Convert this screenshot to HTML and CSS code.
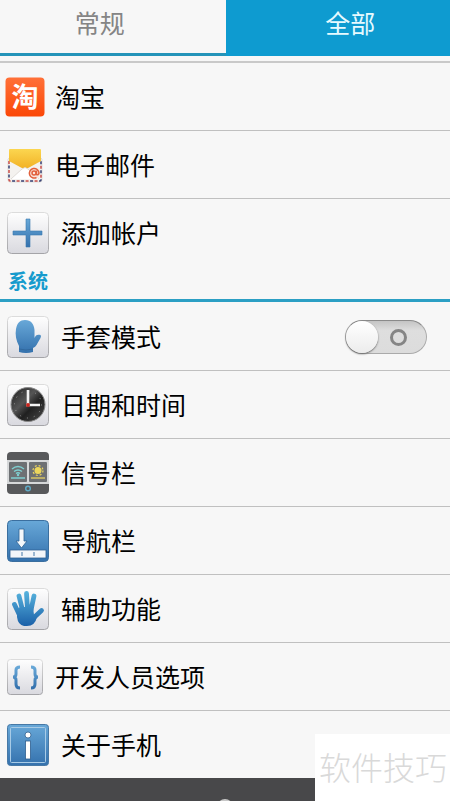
FILE: index.html
```html
<!doctype html>
<html lang="zh-CN">
<head>
  <meta charset="utf-8">
  <meta name="viewport" content="width=device-width, initial-scale=1">
  <title>设置</title>
  <link rel="stylesheet" href="styles.css">
</head>
<body>

<!-- shared gradients for the icons -->
<svg class="defs" width="0" height="0" aria-hidden="true">
  <defs>
    <linearGradient id="tile" x1="0" y1="0" x2="0" y2="1">
      <stop offset="0" stop-color="#fefefe"/>
      <stop offset="1" stop-color="#d9d9df"/>
    </linearGradient>
    <linearGradient id="tile-edge" x1="0" y1="0" x2="0" y2="1">
      <stop offset="0" stop-color="#dcdcdc"/>
      <stop offset="1" stop-color="#a4a4a8"/>
    </linearGradient>
    <linearGradient id="blue" x1="0" y1="0" x2="0" y2="1">
      <stop offset="0" stop-color="#68a8d8"/>
      <stop offset="1" stop-color="#3471ad"/>
    </linearGradient>
    <linearGradient id="hand" gradientUnits="userSpaceOnUse" x1="0" y1="3" x2="0" y2="38">
      <stop offset="0" stop-color="#58b4de"/>
      <stop offset="1" stop-color="#1b60a8"/>
    </linearGradient>
    <linearGradient id="orange" x1="0" y1="0" x2="0" y2="1">
      <stop offset="0" stop-color="#ff7038"/>
      <stop offset="1" stop-color="#fb4707"/>
    </linearGradient>
    <linearGradient id="yellow" x1="0" y1="0" x2="0" y2="1">
      <stop offset="0" stop-color="#fbd650"/>
      <stop offset="1" stop-color="#f2b226"/>
    </linearGradient>
    <linearGradient id="dial" x1="0" y1="0" x2="1" y2="1">
      <stop offset="0" stop-color="#1d1d1d"/>
      <stop offset="0.4" stop-color="#555"/>
      <stop offset="0.6" stop-color="#202020"/>
      <stop offset="1" stop-color="#4a4a4a"/>
    </linearGradient>
  </defs>
</svg>

<nav class="tabs">
  <a class="tab" href="#general">常规</a>
  <a class="tab active" href="#all">全部</a>
</nav>

<main class="settings">
  <ul class="list accounts">
    <li>
      <a class="row app" href="#taobao">
        <svg class="icon icon-app" viewBox="0 0 40 40" aria-hidden="true">
          <rect width="39" height="39" x="0.5" y="0.5" rx="4" fill="url(#orange)"/>
          <text class="logo-text" x="20" y="30" text-anchor="middle">淘</text>
        </svg>
        <span class="label">淘宝</span>
      </a>
    </li>
    <li>
      <a class="row" href="#email">
        <svg class="icon icon-small" viewBox="0 0 36 36" aria-hidden="true">
          <path d="M1 12l2-2h30l2 2v21a2 2 0 0 1-2 2H3a2 2 0 0 1-2-2z" fill="#f4f2ef" stroke="#d5d0ca" stroke-width="0.6"/>
          <path d="M2 14v19q0 1 1 1h30q1 0 1-1V14" fill="none" stroke="#c94c48" stroke-width="1.500" stroke-dasharray="3 6"/>
          <path d="M2 14v19q0 1 1 1h30q1 0 1-1V14" fill="none" stroke="#333d70" stroke-width="1.500" stroke-dasharray="3 6" stroke-dashoffset="4.500"/>
          <path d="M2 3q0-1 1-1h30q1 0 1 1v11l-11 6q-5 3-10 0L2 14z" fill="url(#yellow)"/>
          <path d="M4 32l11-10q3-3 6 0l11 10z" fill="#fff"/>
          <path d="M4 32l11-10q3-3 6 0l11 10" fill="none" stroke="#d8d4cf" stroke-width="0.8"/>
          <circle cx="27.500" cy="26" r="5.500" fill="#f8e4dc"/>
          <g fill="none" stroke="#e2603c" stroke-width="1.500">
            <circle cx="27" cy="26" r="2"/>
            <path d="M29.500 23.500v4q2 1 2.500-1.500a4.800 4.800 0 1 0-2.500 4.500"/>
          </g>
        </svg>
        <span class="label">电子邮件</span>
      </a>
    </li>
    <li>
      <a class="row" href="#add-account">
        <svg class="icon" viewBox="0 0 42 42" aria-hidden="true">
          <rect x="0.5" y="0.5" width="41" height="41" rx="4" fill="url(#tile)" stroke="url(#tile-edge)"/>
          <path d="M19 7h4v12h12v4H23v12h-4V23H6v-4h13z" fill="url(#blue)" stroke="#3b7bb0" stroke-width="0.6"/>
        </svg>
        <span class="label">添加帐户</span>
      </a>
    </li>
  </ul>

  <h2 class="section-title">系统</h2>

  <ul class="list system">
    <li class="row">
      <svg class="icon" viewBox="0 0 42 42" aria-hidden="true">
        <rect x="0.5" y="0.5" width="41" height="41" rx="4" fill="url(#tile)" stroke="url(#tile-edge)"/>
        <path d="M12 30C9 24 8 19 9 13c1-6 4-9 9-9 6 0 9 4 9.500 10v8c1-3 3-4 6-3q1 1 0 3l-4 7q-1 2-3.500 3v4q-7 2-14 0z" fill="url(#blue)"/>
        <path d="M12 33q7 2 14 0" fill="none" stroke="#2e6499" stroke-width="0.800"/>
      </svg>
      <label class="label" for="glove">手套模式</label>
      <input class="switch" type="checkbox" role="switch" id="glove">
    </li>
    <li>
      <a class="row" href="#date">
        <svg class="icon" viewBox="0 0 42 42" aria-hidden="true">
          <rect x="0.5" y="0.5" width="41" height="41" rx="4" fill="url(#tile)" stroke="url(#tile-edge)"/>
          <circle cx="21" cy="20.500" r="17" fill="url(#dial)" stroke="#8a8a8a"/>
          <circle cx="21" cy="20.500" r="13.500" fill="none" stroke="#999" stroke-width="1" stroke-dasharray="1 6.070"/>
          <path d="M21 22V6M19 21h14" stroke="#f2f2f2" stroke-width="2.600" fill="none"/>
          <circle cx="21" cy="21" r="2" fill="#c8261e"/>
        </svg>
        <span class="label">日期和时间</span>
      </a>
    </li>
    <li>
      <a class="row" href="#signal">
        <svg class="icon" viewBox="0 0 42 42" aria-hidden="true">
          <rect width="42" height="42" rx="4" fill="#58595b"/>
          <path d="M0 8h42v24H0z" fill="#d6d8d9"/>
          <rect x="2" y="10" width="18" height="20" rx="1" fill="#6d7073"/>
          <rect x="22" y="10" width="18" height="20" rx="1" fill="#6d7073"/>
          <g fill="none" stroke="#7fcfd0" stroke-width="1.500">
            <path d="M5 17q6-5 12 0M7 19.500q4-3 8 0M9 21.500q2-1.500 4 0"/>
            <path d="M4 26h14"/>
            <circle cx="21" cy="36.500" r="2.300" stroke="#60a9c4"/>
          </g>
          <circle cx="11" cy="23" r="1.200" fill="#7fcfd0"/>
          <circle cx="31" cy="18.500" r="3.500" fill="#ecd65c"/>
          <circle cx="31" cy="18.500" r="5" fill="none" stroke="#ecd65c" stroke-width="1.200" stroke-dasharray="2 1.930"/>
          <path d="M24 26h14" stroke="#d6c365" stroke-width="1.500"/>
        </svg>
        <span class="label">信号栏</span>
      </a>
    </li>
    <li>
      <a class="row" href="#navigation">
        <svg class="icon" viewBox="0 0 42 42" aria-hidden="true">
          <rect x="0.5" y="0.5" width="41" height="41" rx="4" fill="url(#blue)" stroke="#3b6f9f"/>
          <path d="M12 9h5v12h3l-5.500 7L9 21h3z" fill="#f4f8fb" stroke="#2f6294" stroke-width="0.800"/>
          <rect x="3" y="30" width="36" height="8" fill="#f3f6f9" stroke="#2f6294" stroke-width="0.800"/>
          <path d="M15 32v4M27 32v4" stroke="#4479a8"/>
        </svg>
        <span class="label">导航栏</span>
      </a>
    </li>
    <li>
      <a class="row" href="#accessibility">
        <svg class="icon" viewBox="0 0 42 42" aria-hidden="true">
          <rect x="0.5" y="0.5" width="41" height="41" rx="4" fill="url(#tile)" stroke="url(#tile-edge)"/>
          <g fill="none" stroke="url(#hand)" stroke-width="4.800" stroke-linecap="round">
            <path d="M12 26L7.500 16.500M15.500 22L12 8M20.500 21l-1-15.500M24 22l3-14M27 29.500l7.500-7"/>
          </g>
          <path d="M10 22l3-3h13l1 8 3 2q-2 9-10 9h-3q-6-1-7-9z" fill="url(#hand)"/>
        </svg>
        <span class="label">辅助功能</span>
      </a>
    </li>
    <li>
      <a class="row" href="#developer">
        <svg class="icon icon-small" viewBox="0 0 36 36" aria-hidden="true">
          <rect x="0.5" y="0.5" width="35" height="35" rx="3" fill="url(#tile)" stroke="url(#tile-edge)"/>
          <path d="M13 8q-4 0-4 3v4q0 3-3 3 3 0 3 3v4q0 4 4 4M24 8q4 0 4 3v4q0 3 3 3-3 0-3 3v4q0 4-4 4" fill="none" stroke="url(#blue)" stroke-width="3"/>
        </svg>
        <span class="label">开发人员选项</span>
      </a>
    </li>
    <li>
      <a class="row" href="#about">
        <svg class="icon" viewBox="0 0 42 42" aria-hidden="true">
          <rect x="0.5" y="0.5" width="41" height="41" rx="3" fill="url(#blue)" stroke="#4779a6"/>
          <rect x="3.500" y="3.500" width="35" height="35" rx="1" fill="none" stroke="#a8cbe6"/>
          <circle cx="21" cy="11" r="3" fill="#fff" stroke="#2f5f8f" stroke-width="0.800"/>
          <rect x="18.500" y="17" width="5" height="18" fill="#fff" stroke="#2f5f8f" stroke-width="0.800"/>
        </svg>
        <span class="label">关于手机</span>
      </a>
    </li>
  </ul>
</main>

<footer class="bottom-bar">
  <button class="home" type="button" aria-label="主屏幕"></button>
</footer>

<div class="watermark">软件技巧</div>

</body>
</html>
```
FILE: styles.css
```css
*,
*::before,
*::after {
  box-sizing: border-box;
}

body {
  margin: 0;
  min-height: 100vh;
  display: flex;
  flex-direction: column;
  position: relative;
  background: #f7f7f7;
  color: #000;
  font-family: "Noto Sans CJK SC", sans-serif;
  font-size: 25px;
}

a {
  color: inherit;
  text-decoration: none;
}

.defs {
  position: absolute;
}

.tabs {
  display: flex;
}

.tab {
  flex: 1;
  height: 56px;
  padding-right: 26px;
  border-bottom: 3px solid #2494b9;
  color: #858585;
  line-height: 44px;
  text-align: center;
}

.tab.active {
  padding-right: 0;
  padding-left: 25px;
  border-bottom-color: #0e9bd0;
  background: #0e9bd0;
  color: #e6faff;
}

/* list */
.settings {
  padding-top: 5px;
}

.list {
  margin: 0;
  padding: 0;
  list-style: none;
}

.accounts {
  border-top: 2px solid #c9c9c9;
}

.system {
  padding-top: 1px;
}

.row {
  display: flex;
  align-items: center;
  gap: 12px;
  height: 68px;
  padding: 0 23px 0 7px;
  border-bottom: 1px solid #c0c0c0;
}

.row.app {
  gap: 10px;
  padding-left: 5px;
}

.list > li:last-child .row {
  height: 67px;
  border-bottom: none;
}

.icon {
  flex: none;
  width: 42px;
  height: 42px;
}

.icon-app {
  width: 40px;
  height: 40px;
}

.icon-small {
  width: 36px;
  height: 36px;
}

.logo-text {
  fill: #fff;
  font-size: 27px;
  font-weight: 700;
}

.label {
  flex: 1;
  padding-bottom: 2px;
  line-height: 36px;
}

.section-title {
  height: 36px;
  margin: 0;
  padding-left: 8px;
  border-bottom: 3px solid #2b9fc4;
  color: #169bcd;
  font-size: 20px;
  font-weight: 700;
  line-height: 30px;
}

/* toggle */
.switch {
  appearance: none;
  position: relative;
  width: 82px;
  height: 34px;
  margin: 0;
  border: 1px solid #aaa;
  border-top-color: #8a8a8a;
  border-radius: 17px;
  background: linear-gradient(#c4c4c4, #dedede 30%, #dcdcdc);
}

.switch::before {
  content: "";
  position: absolute;
  top: 0;
  left: 0;
  width: 32px;
  height: 32px;
  border-radius: 50%;
  background: linear-gradient(#fff, #ececec);
  box-shadow: 0 1px 2px #666;
}

.switch::after {
  content: "";
  position: absolute;
  top: 8px;
  right: 19px;
  width: 17px;
  height: 17px;
  border: 3px solid #858585;
  border-radius: 50%;
}

.switch:checked::before {
  left: 48px;
}

.switch:checked::after {
  right: 46px;
}

/* bottom bar */
.bottom-bar {
  flex: 1 0 23px;
  display: flex;
  justify-content: center;
  min-height: 0;
  max-height: 23px;
  padding-top: 21px;
  overflow: hidden;
  background: #48484a;
}

.home {
  flex: none;
  width: 16px;
  height: 16px;
  padding: 0;
  border: none;
  border-radius: 50%;
  background: #c8c8c8;
}

.watermark {
  position: absolute;
  right: 0;
  bottom: 0;
  padding: 8px 3px 11px 4px;
  background: #fff;
  color: #d9d9d9;
  font-size: 32px;
  font-weight: 300;
  line-height: 48px;
}
```
